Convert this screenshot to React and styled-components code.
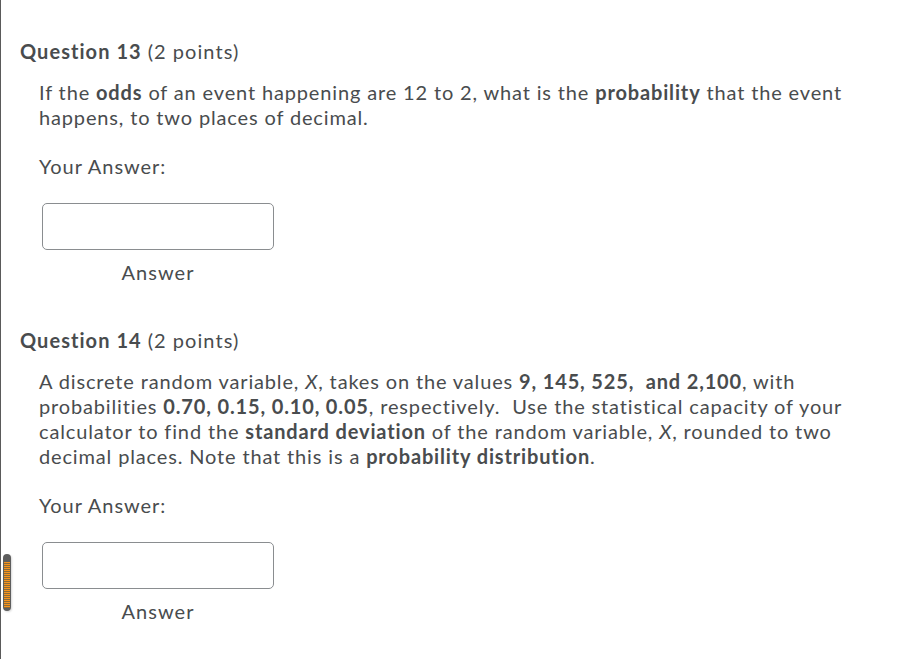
import React from 'react';
import styled, { createGlobalStyle } from 'styled-components';

const GlobalStyle = createGlobalStyle`
  html, body {
    margin: 0;
    padding: 0;
    background: #fff;
  }
  body {
    font-family: Lato, "Open Sans", sans-serif;
    color: #494c4e;
    letter-spacing: 0.85px;
  }
`;

const Page = styled.div`
  position: relative;
  min-height: 100vh;
  box-sizing: border-box;
  border-left: 1px solid #5a5a5a;
  padding: 39px 0 0 19px;
`;

const Question = styled.section`
  margin-bottom: 43px;
`;

const Heading = styled.h2`
  margin: 0;
  font-size: 20px;
  line-height: 24px;
  font-weight: 700;
  letter-spacing: 1.05px;
  color: #494c4e;

  span {
    font-weight: 400;
  }
`;

const Body = styled.div`
  margin: 17px 0 0 19px;
  width: 815px;
  font-size: 20px;
  line-height: 25px;

  b {
    font-weight: 700;
  }
`;

const Prompt = styled.p`
  margin: 0;
`;

const Label = styled.p`
  margin: 24px 0 0;
  letter-spacing: 0.95px;
`;

const AnswerBox = styled.div`
  display: flex;
  flex-direction: column;
  align-items: center;
  width: 232px;
  margin: 24px 0 0 3px;
`;

const Input = styled.input`
  box-sizing: border-box;
  width: 232px;
  height: 47px;
  border: 1px solid #8a8d90;
  border-radius: 5px;
  background: #fff;
  outline: none;
`;

const AnswerLabel = styled.span`
  margin-top: 10px;
  font-size: 20px;
  line-height: 25px;
  letter-spacing: 1.05px;
`;

const ScrollHandle = styled.div`
  position: absolute;
  left: 2px;
  top: 554px;
  width: 8px;
  height: 57px;
  box-sizing: border-box;
  padding: 8px 1px 3px;
  border-radius: 4px;
  background: #5e5e5e;
  box-shadow: 1px 1px 2px rgba(0, 0, 0, 0.15);

  &::after {
    content: '';
    display: block;
    height: 100%;
    background: repeating-linear-gradient(
      to bottom,
      #f7941d 0,
      #f7941d 1px,
      #8a6a3a 1px,
      #8a6a3a 2px
    );
  }
`;

const questions = [
  {
    number: 13,
    points: 2,
    text: (
      <>
        If the <b>odds</b> of an event happening are 12 to 2, what is the <b>probability</b> that the event happens, to two places of decimal.
      </>
    ),
  },
  {
    number: 14,
    points: 2,
    text: (
      <>
        A discrete random variable, <i>X</i>, takes on the values <b>9, 145, 525, &nbsp;and 2,100</b>, with probabilities <b>0.70, 0.15, 0.10, 0.05</b>, respectively.&nbsp; Use the statistical capacity of your calculator to find the <b>standard deviation</b> of the random variable, <i>X</i>, rounded to two decimal places. Note that this is a <b>probability distribution</b>.
      </>
    ),
  },
];

const App = () => {
  return (
    <>
      <GlobalStyle />
      <Page>
        {questions.map((q) => (
          <Question key={q.number}>
            <Heading>
              Question {q.number} <span>({q.points} points)</span>
            </Heading>
            <Body>
              <Prompt>{q.text}</Prompt>
              <Label>Your Answer:</Label>
              <AnswerBox>
                <Input type="text" aria-label="Answer" />
                <AnswerLabel>Answer</AnswerLabel>
              </AnswerBox>
            </Body>
          </Question>
        ))}
        <ScrollHandle />
      </Page>
    </>
  );
};

export default App;
